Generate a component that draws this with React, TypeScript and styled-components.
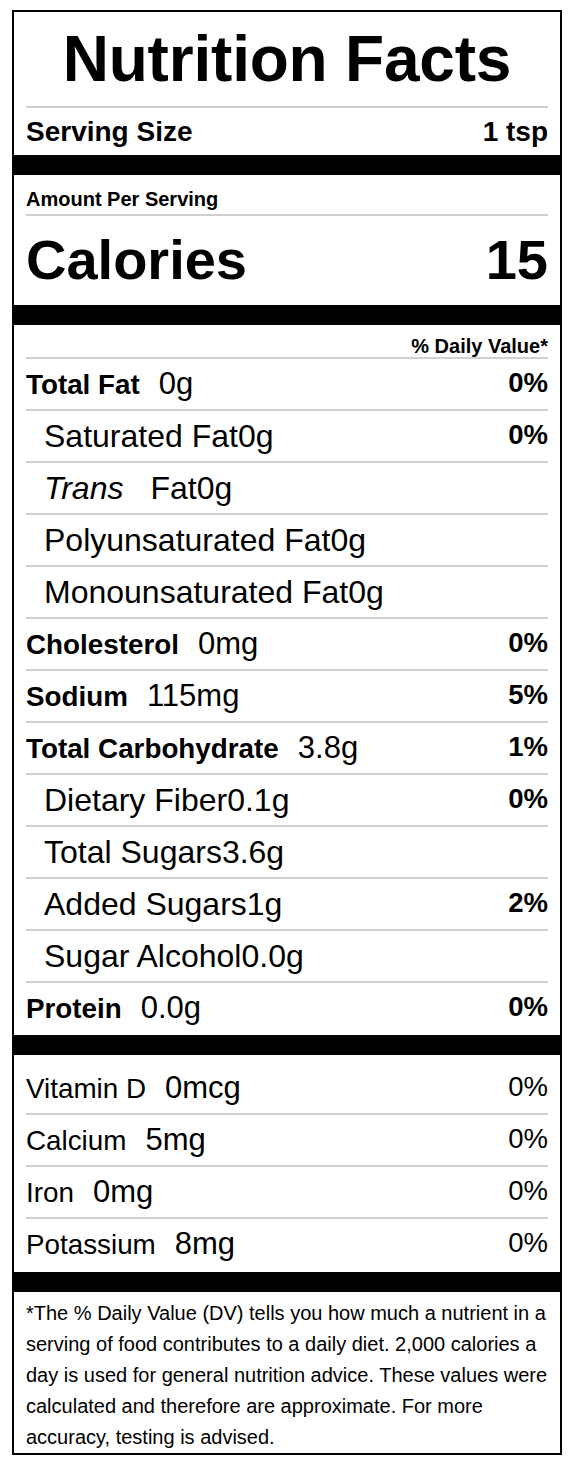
import React from 'react'
import styled, { createGlobalStyle } from 'styled-components'

const GlobalStyle = createGlobalStyle`
  html, body {
    margin: 0;
    padding: 0;
    background: #fff;
  }
  body {
    font-family: 'Liberation Sans', Arial, Helvetica, sans-serif;
    color: #000;
  }
`

const Page = styled.div`
  padding: 10px 8px 12px 12px;
`

const Label = styled.section`
  width: 550px;
  box-sizing: border-box;
  border: 2px solid #000;
  display: flex;
  flex-direction: column;
`

const Title = styled.h1`
  margin: 0 12px;
  height: 94px;
  display: flex;
  align-items: center;
  justify-content: center;
  font-size: 64px;
  font-weight: 700;
  letter-spacing: -0.2px;
  border-bottom: 2px solid #d0d0d0;
`

const ServingRow = styled.div`
  margin: 0 12px;
  height: 47px;
  display: flex;
  align-items: center;
  justify-content: space-between;
  font-size: 28px;
  font-weight: 700;
`

const Bar = styled.div`
  height: 20px;
  background: #000;
`

const AmountHeader = styled.div`
  margin: 0 12px;
  height: 41px;
  display: flex;
  align-items: flex-end;
  padding-bottom: 5px;
  box-sizing: border-box;
  font-size: 20px;
  line-height: 1;
  font-weight: 700;
  border-bottom: 2px solid #d0d0d0;
`

const CaloriesRow = styled.div`
  margin: 0 12px;
  height: 89px;
  padding-bottom: 3px;
  box-sizing: border-box;
  display: flex;
  align-items: center;
  justify-content: space-between;
  font-size: 56px;
  font-weight: 700;
`

const Section = styled.div<{ $top?: number; $bottom?: number }>`
  padding: ${(p) => p.$top ?? 0}px 12px ${(p) => p.$bottom ?? 0}px;
  display: flex;
  flex-direction: column;
`

const DvHeader = styled.div`
  height: 34px;
  display: flex;
  align-items: flex-end;
  justify-content: flex-end;
  padding-bottom: 1px;
  box-sizing: border-box;
  font-size: 20px;
  line-height: 1;
  font-weight: 700;
  border-bottom: 2px solid #d0d0d0;
`

const Row = styled.div<{ $indent?: boolean; $last?: boolean }>`
  height: ${(p) => (p.$last ? 50 : 52)}px;
  box-sizing: border-box;
  display: flex;
  align-items: center;
  justify-content: space-between;
  padding-left: ${(p) => (p.$indent ? 18 : 0)}px;
  border-bottom: ${(p) => (p.$last ? 'none' : '2px solid #d0d0d0')};
`

const Name = styled.span<{ $bold?: boolean }>`
  display: flex;
  align-items: baseline;
  gap: 19px;
  font-size: 27.8px;
  font-weight: ${(p) => (p.$bold ? 700 : 400)};
`

const SubName = styled.span`
  font-size: 32px;
  font-weight: 400;
`

const Amount = styled.span`
  font-size: 31px;
  font-weight: 400;
`

const Italic = styled.em`
  font-style: italic;
  margin-right: 27px;
`

const Percent = styled.span<{ $bold?: boolean }>`
  font-size: 27.5px;
  font-weight: ${(p) => (p.$bold ? 700 : 400)};
  margin-top: -2px;
`

const Footnote = styled.p`
  margin: 0;
  padding: 6px 6px 0 12px;
  font-size: 20px;
  line-height: 31px;
`

type Nutrient = {
  name: string
  amount: string
  dv?: string
  sub?: boolean
  trans?: boolean
}

const nutrients: Nutrient[] = [
  { name: 'Total Fat', amount: '0g', dv: '0%' },
  { name: 'Saturated Fat', amount: '0g', dv: '0%', sub: true },
  { name: 'Fat', amount: '0g', sub: true, trans: true },
  { name: 'Polyunsaturated Fat', amount: '0g', sub: true },
  { name: 'Monounsaturated Fat', amount: '0g', sub: true },
  { name: 'Cholesterol', amount: '0mg', dv: '0%' },
  { name: 'Sodium', amount: '115mg', dv: '5%' },
  { name: 'Total Carbohydrate', amount: '3.8g', dv: '1%' },
  { name: 'Dietary Fiber', amount: '0.1g', dv: '0%', sub: true },
  { name: 'Total Sugars', amount: '3.6g', sub: true },
  { name: 'Added Sugars', amount: '1g', dv: '2%', sub: true },
  { name: 'Sugar Alcohol', amount: '0.0g', sub: true },
  { name: 'Protein', amount: '0.0g', dv: '0%' }
]

const vitamins = [
  { name: 'Vitamin D', amount: '0mcg', dv: '0%' },
  { name: 'Calcium', amount: '5mg', dv: '0%' },
  { name: 'Iron', amount: '0mg', dv: '0%' },
  { name: 'Potassium', amount: '8mg', dv: '0%' }
]

export default function App() {
  return (
    <Page>
      <GlobalStyle />
      <Label>
        <Title>Nutrition Facts</Title>
        <ServingRow>
          <span>Serving Size</span>
          <span>1 tsp</span>
        </ServingRow>
        <Bar />
        <AmountHeader>Amount Per Serving</AmountHeader>
        <CaloriesRow>
          <span>Calories</span>
          <span>15</span>
        </CaloriesRow>
        <Bar />
        <Section $bottom={2}>
          <DvHeader>% Daily Value*</DvHeader>
          {nutrients.map((n, i) => (
            <Row key={n.name + i} $indent={n.sub} $last={i === nutrients.length - 1}>
              {n.sub ? (
                <SubName>
                  {n.trans && <Italic>Trans</Italic>}
                  {n.name}
                  {n.amount}
                </SubName>
              ) : (
                <Name $bold>
                  {n.name}
                  <Amount>{n.amount}</Amount>
                </Name>
              )}
              {n.dv && <Percent $bold>{n.dv}</Percent>}
            </Row>
          ))}
        </Section>
        <Bar />
        <Section $top={8} $bottom={3}>
          {vitamins.map((v, i) => (
            <Row key={v.name} $last={i === vitamins.length - 1}>
              <Name>
                {v.name}
                <Amount>{v.amount}</Amount>
              </Name>
              <Percent>{v.dv}</Percent>
            </Row>
          ))}
        </Section>
        <Bar />
        <Footnote>
          *The % Daily Value (DV) tells you how much a nutrient in a serving of food
          contributes to a daily diet. 2,000 calories a day is used for general
          nutrition advice. These values were calculated and therefore are
          approximate. For more accuracy, testing is advised.
        </Footnote>
      </Label>
    </Page>
  )
}
